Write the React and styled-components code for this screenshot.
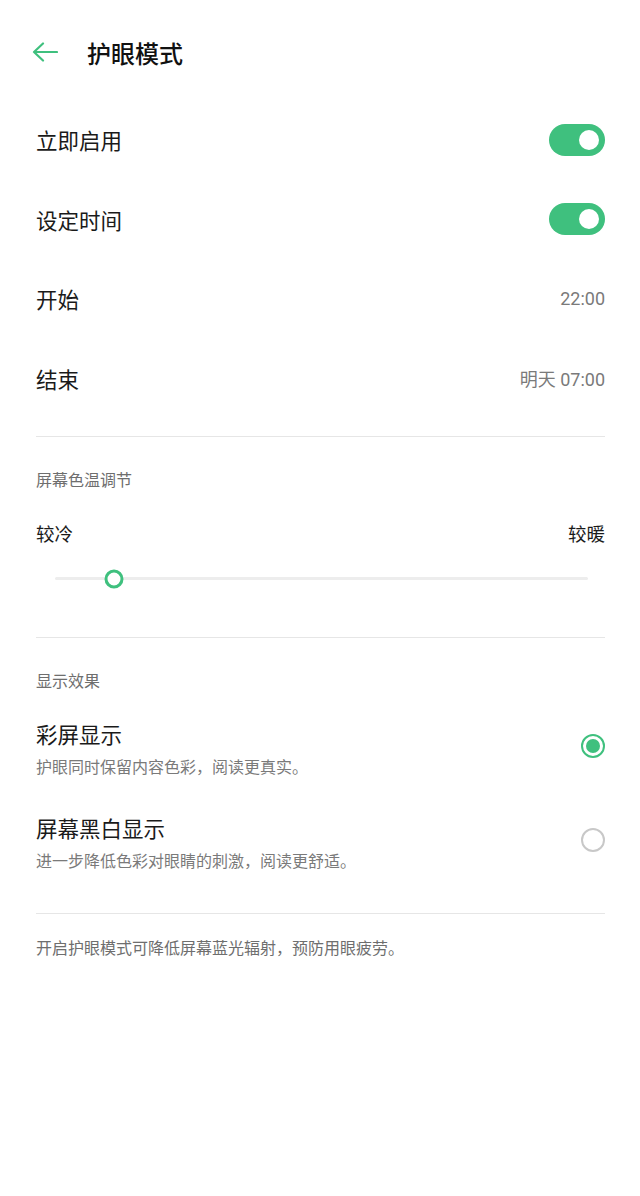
import styled, { createGlobalStyle } from "styled-components";

const GREEN = "#3fc07e";

const Global = createGlobalStyle`
  html, body {
    margin: 0;
    padding: 0;
    background: #ffffff;
  }
  body {
    font-family: "Noto Sans CJK SC", "Noto Sans", Roboto, sans-serif;
    color: #1a1a1a;
  }
`;

export default function App() {
  return (
    <Page>
      <Global />
      <Header>
        <BackButton aria-label="返回">
          <svg width="26" height="20" viewBox="0 0 26 20" fill="none">
            <path
              d="M25 10H2M11 1.5L2 10l9 8.5"
              stroke={GREEN}
              strokeWidth="2.2"
              strokeLinecap="round"
              strokeLinejoin="round"
            />
          </svg>
        </BackButton>
        <Title>护眼模式</Title>
      </Header>

      <Row>
        <RowLabel>立即启用</RowLabel>
        <Toggle $on />
      </Row>
      <Row>
        <RowLabel>设定时间</RowLabel>
        <Toggle $on />
      </Row>
      <Row>
        <RowLabel>开始</RowLabel>
        <RowValue>22:00</RowValue>
      </Row>
      <Row>
        <RowLabel>结束</RowLabel>
        <RowValue>明天 07:00</RowValue>
      </Row>

      <Divider $top={18} />

      <SectionTitle>屏幕色温调节</SectionTitle>
      <SliderLabels>
        <span>较冷</span>
        <span>较暖</span>
      </SliderLabels>
      <Track>
        <Thumb style={{ left: "11%" }} />
      </Track>

      <Divider $top={57} />

      <SectionTitle>显示效果</SectionTitle>
      <Option $top={30}>
        <OptionText>
          <OptionTitle>彩屏显示</OptionTitle>
          <OptionSub>护眼同时保留内容色彩，阅读更真实。</OptionSub>
        </OptionText>
        <Radio $checked />
      </Option>
      <Option $top={37}>
        <OptionText>
          <OptionTitle>屏幕黑白显示</OptionTitle>
          <OptionSub>进一步降低色彩对眼睛的刺激，阅读更舒适。</OptionSub>
        </OptionText>
        <Radio />
      </Option>

      <Divider $top={42} />

      <Footer>开启护眼模式可降低屏幕蓝光辐射，预防用眼疲劳。</Footer>
    </Page>
  );
}

const Page = styled.div`
  width: 640px;
  min-height: 1196px;
  box-sizing: border-box;
  padding: 0 35px 0 36px;
  background: #fff;
`;

const Header = styled.header`
  height: 100px;
  display: flex;
  align-items: center;
  padding-top: 4px;
  box-sizing: border-box;
`;

const BackButton = styled.div`
  width: 51px;
  display: flex;
  align-items: center;
  margin-left: -4px;
  margin-right: 4px;
`;

const Title = styled.h1`
  margin: 0;
  font-size: 24px;
  font-weight: 500;
  color: #111;
  letter-spacing: 0;
`;

const Row = styled.div`
  height: 79.5px;
  display: flex;
  align-items: center;
  justify-content: space-between;
`;

const RowLabel = styled.span`
  font-size: 21.5px;
  color: #1a1a1a;
`;

const RowValue = styled.span`
  font-size: 18px;
  color: #7a7a7a;
  font-family: Roboto, "Noto Sans CJK SC", sans-serif;
`;

const Toggle = styled.div`
  position: relative;
  width: 56px;
  height: 32px;
  border-radius: 16px;
  background: ${(p) => (p.$on ? GREEN : "#d8d8d8")};

  &::after {
    content: "";
    position: absolute;
    top: 6px;
    ${(p) => (p.$on ? "right: 6px;" : "left: 6px;")}
    width: 20px;
    height: 20px;
    border-radius: 50%;
    background: #fff;
  }
`;

const Divider = styled.div`
  height: 1px;
  background: #e6e6e6;
  margin-top: ${(p) => p.$top}px;
`;

const SectionTitle = styled.div`
  padding-top: 32px;
  font-size: 16px;
  line-height: 20px;
  color: #6e6e6e;
`;

const SliderLabels = styled.div`
  margin-top: 31px;
  display: flex;
  justify-content: space-between;
  font-size: 18.5px;
  line-height: 26px;
  color: #1a1a1a;
`;

const Track = styled.div`
  position: relative;
  margin: 31px 17px 0 19px;
  height: 3px;
  border-radius: 2px;
  background: #ededed;
`;

const Thumb = styled.div`
  position: absolute;
  top: 50%;
  width: 13px;
  height: 13px;
  border: 3px solid ${GREEN};
  border-radius: 50%;
  background: #fff;
  transform: translate(-50%, -50%);
`;

const Option = styled.div`
  margin-top: ${(p) => p.$top}px;
  display: flex;
  align-items: center;
  justify-content: space-between;
`;

const OptionText = styled.div`
  display: flex;
  flex-direction: column;
  gap: 7px;
`;

const OptionTitle = styled.div`
  font-size: 21.5px;
  line-height: 28px;
  color: #1a1a1a;
`;

const OptionSub = styled.div`
  font-size: 16px;
  line-height: 22px;
  color: #7a7a7a;
`;

const Radio = styled.div`
  width: 20px;
  height: 20px;
  border-radius: 50%;
  border: 2px solid ${(p) => (p.$checked ? GREEN : "#c8c8c8")};
  position: relative;
  margin-top: -6px;

  &::after {
    content: "";
    position: absolute;
    inset: 3px;
    border-radius: 50%;
    background: ${(p) => (p.$checked ? GREEN : "transparent")};
  }
`;

const Footer = styled.p`
  margin: 22px 0 0;
  font-size: 16px;
  line-height: 22px;
  color: #6e6e6e;
`;
